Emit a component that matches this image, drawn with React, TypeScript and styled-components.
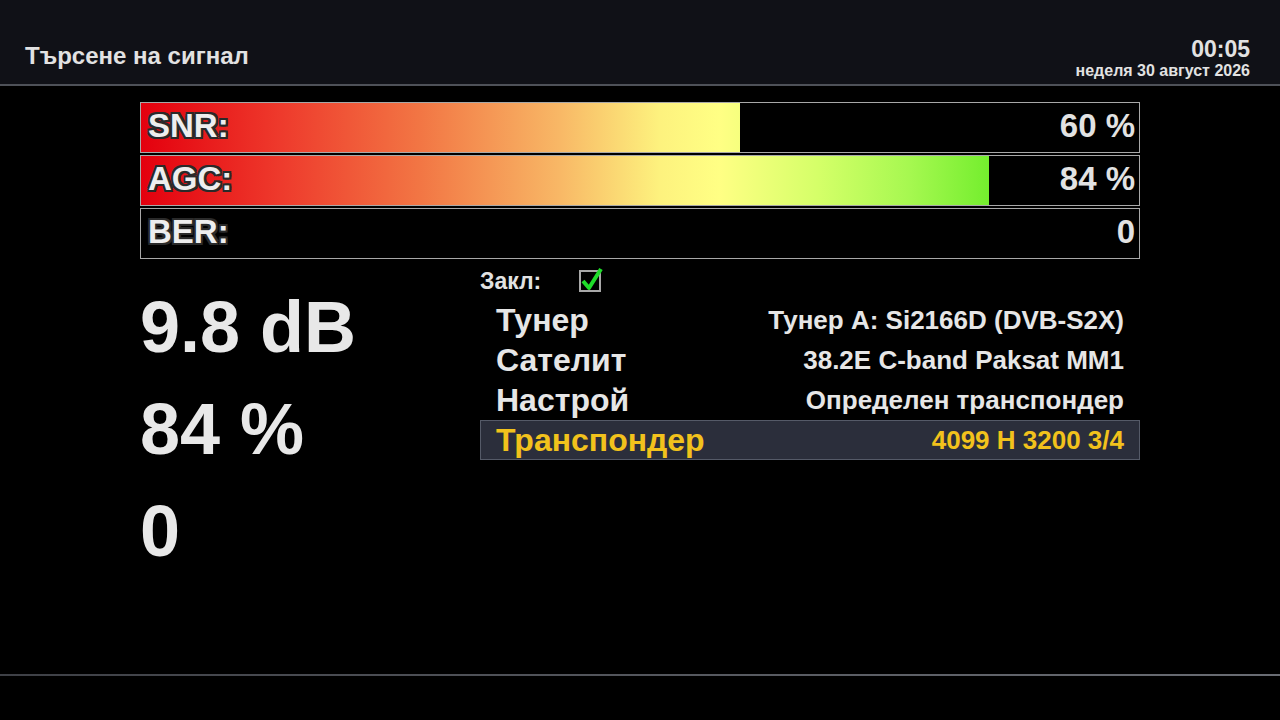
import styled, { createGlobalStyle } from "styled-components";

const GlobalStyle = createGlobalStyle`
  html, body {
    margin: 0;
    padding: 0;
    background: #000;
  }

  body {
    font-family: "Liberation Sans", Arial, sans-serif;
    font-weight: bold;
    color: #e4e4e4;
  }
`;

const Screen = styled.div`
  width: 1280px;
  height: 720px;
  display: flex;
  flex-direction: column;
  background: #000;
  overflow: hidden;
`;

const Header = styled.header`
  height: 86px;
  flex-shrink: 0;
  background: #101117;
  border-bottom: 2px solid #4e5158;
  display: flex;
  justify-content: space-between;
  align-items: flex-end;
  padding: 0 30px 13px 25px;
  box-sizing: border-box;
`;

const Title = styled.h1`
  margin: 0;
  font-size: 24px;
  font-weight: bold;
  color: #e2e2e2;
  line-height: 1;
  padding-bottom: 3px;
`;

const Clock = styled.div`
  display: flex;
  flex-direction: column;
  align-items: flex-end;
  line-height: 1;
  margin-bottom: -8px;
`;

const Time = styled.span`
  font-size: 23px;
  color: #e2e2e2;
`;

const DateLine = styled.span`
  font-size: 16px;
  color: #e2e2e2;
  margin-top: 2px;
`;

const Main = styled.main`
  flex: 1;
  padding: 16px 140px 0;
  display: flex;
  flex-direction: column;
`;

const Bars = styled.div`
  display: flex;
  flex-direction: column;
  gap: 2px;
`;

const Bar = styled.div`
  position: relative;
  height: 51px;
  box-sizing: border-box;
  border: 1px solid #a8a8a8;
  background: #000;
  display: flex;
  align-items: center;
  justify-content: space-between;
  padding: 0 4px 4px 7px;
`;

const Fill = styled.div`
  position: absolute;
  left: 0;
  top: 0;
  bottom: 0;
  background: linear-gradient(
    90deg,
    #e4000e 0%,
    #ee3a2c 14%,
    #f27644 28%,
    #f8b866 42%,
    #fdf27e 52%,
    #ffff84 58%,
    #d4ff68 68%,
    #a6f850 77%,
    #74ee2e 85%,
    #5ee820 100%
  );
  background-size: 998px 100%;
  background-repeat: no-repeat;
`;

const BarLabel = styled.span`
  position: relative;
  font-size: 33px;
  color: #eeeeee;
  text-shadow:
    -2px -2px 0 #2a2a2a, 2px -2px 0 #2a2a2a, -2px 2px 0 #2a2a2a, 2px 2px 0 #2a2a2a,
    0 -2px 0 #2a2a2a, 0 2px 0 #2a2a2a, -2px 0 0 #2a2a2a, 2px 0 0 #2a2a2a;
`;

const BarValue = styled.span`
  position: relative;
  font-size: 33px;
  color: #e2e2e2;
`;

const Lower = styled.div`
  display: flex;
  margin-top: 4px;
`;

const BigColumn = styled.div`
  width: 340px;
  display: flex;
  flex-direction: column;
  padding-top: 13px;
`;

const BigNumber = styled.div`
  font-size: 72px;
  line-height: 102px;
  color: #e8e8e8;
`;

const Info = styled.div`
  flex: 1;
  display: flex;
  flex-direction: column;
`;

const LockRow = styled.div`
  height: 37px;
  display: flex;
  align-items: center;
  gap: 38px;
  font-size: 23px;
  color: #e2e2e2;
`;

const InfoRow = styled.div<{ $active?: boolean }>`
  height: 40px;
  box-sizing: border-box;
  display: flex;
  align-items: center;
  justify-content: space-between;
  padding: 0 15px 0 15px;
  background: ${(p) => (p.$active ? "#2b2e3b" : "transparent")};
  border: 1px solid ${(p) => (p.$active ? "#555a68" : "transparent")};
  color: ${(p) => (p.$active ? "#f2c21c" : "#e6e6e6")};
`;

const RowLabel = styled.span`
  font-size: 32px;
`;

const RowValue = styled.span`
  font-size: 26px;
`;

const Footer = styled.footer`
  height: 44px;
  flex-shrink: 0;
  border-top: 2px solid;
  border-image: linear-gradient(90deg, #3e4046, #6a6d74) 1;
`;

function LockBox() {
  return (
    <svg width="26" height="26" viewBox="0 0 26 26" style={{ marginTop: -6 }}>
      <rect x="1" y="5" width="20" height="20" fill="#000" stroke="#a8a8a8" strokeWidth="2" />
      <path d="M4 15 L10 22 L22 3" fill="none" stroke="#1fdc2a" strokeWidth="4" strokeLinejoin="round" />
    </svg>
  );
}

const bars = [
  { label: "SNR:", value: "60 %", fill: 60 },
  { label: "AGC:", value: "84 %", fill: 85 },
  { label: "BER:", value: "0", fill: 0 },
];

const rows = [
  { label: "Тунер", value: "Тунер A: Si2166D (DVB-S2X)" },
  { label: "Сателит", value: "38.2E C-band Paksat MM1" },
  { label: "Настрой", value: "Определен транспондер" },
  { label: "Транспондер", value: "4099 H 3200 3/4", active: true },
];

export default function App() {
  return (
    <Screen>
      <GlobalStyle />
      <Header>
        <Title>Търсене на сигнал</Title>
        <Clock>
          <Time>00:05</Time>
          <DateLine>неделя 30 август 2026</DateLine>
        </Clock>
      </Header>
      <Main>
        <Bars>
          {bars.map((b) => (
            <Bar key={b.label}>
              {b.fill > 0 && <Fill style={{ width: `${b.fill}%` }} />}
              <BarLabel>{b.label}</BarLabel>
              <BarValue>{b.value}</BarValue>
            </Bar>
          ))}
        </Bars>
        <Lower>
          <BigColumn>
            <BigNumber>9.8 dB</BigNumber>
            <BigNumber>84 %</BigNumber>
            <BigNumber>0</BigNumber>
          </BigColumn>
          <Info>
            <LockRow>
              <span>Закл:</span>
              <LockBox />
            </LockRow>
            {rows.map((r) => (
              <InfoRow key={r.label} $active={r.active}>
                <RowLabel>{r.label}</RowLabel>
                <RowValue>{r.value}</RowValue>
              </InfoRow>
            ))}
          </Info>
        </Lower>
      </Main>
      <Footer />
    </Screen>
  );
}
